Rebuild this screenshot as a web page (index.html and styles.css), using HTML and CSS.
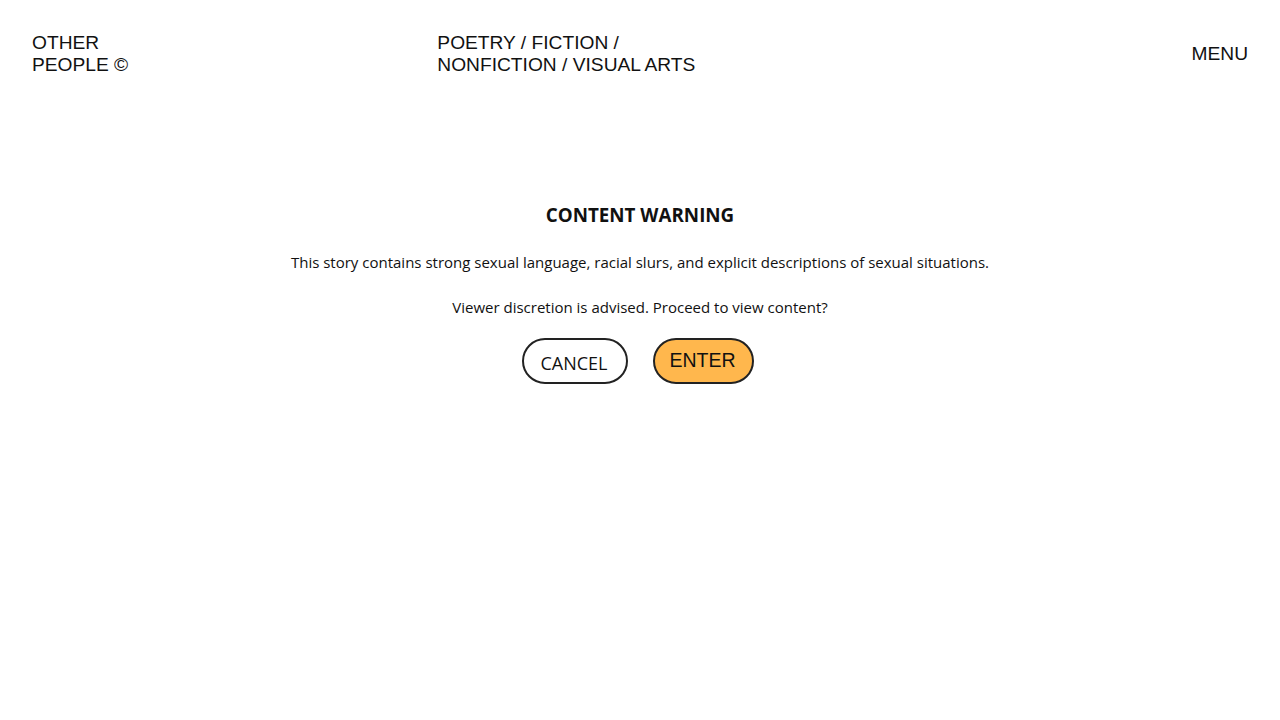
FILE: index.html
```html
<!DOCTYPE html>
<html lang="en">
<head>
<meta charset="utf-8">
<title>Other People</title>
<link rel="stylesheet" href="styles.css">
</head>
<body>
<header class="site-header">
  <div class="brand">OTHER<br>PEOPLE ©</div>
  <nav class="sections">POETRY / FICTION /<br>NONFICTION / VISUAL ARTS</nav>
  <div class="menu">MENU</div>
</header>
<main class="warning">
  <h1 class="warning-title">CONTENT WARNING</h1>
  <p class="warning-text">This story contains strong sexual language, racial slurs, and explicit descriptions of sexual situations.</p>
  <p class="warning-text">Viewer discretion is advised. Proceed to view content?</p>
  <div class="actions">
    <button class="btn btn-cancel">CANCEL</button>
    <button class="btn btn-enter">ENTER</button>
  </div>
</main>
</body>
</html>
```
FILE: styles.css
```css
* { box-sizing: border-box; }
html, body { margin: 0; padding: 0; background: #fff; }
body { color: #111; font-family: "Open Sans", "Noto Sans", sans-serif; }

.site-header {
  display: grid;
  grid-template-columns: 1fr 1fr 1fr;
  align-items: center;
  padding: 32px 32px 0 32px;
  font-family: "Liberation Sans", Arial, sans-serif;
  font-size: 19.2px;
  line-height: 22px;
  color: #111;
}
.menu { text-align: right; }

.warning {
  display: flex;
  flex-direction: column;
  align-items: center;
  text-align: center;
  padding-top: 127px;
}
.warning-title {
  margin: 0;
  font-size: 18.8px;
  font-weight: 700;
  line-height: 24px;
}
.warning-text {
  margin: 24px 0 0 0;
  font-size: 15px;
  line-height: 22px;
}
.warning-text + .warning-text { margin-top: 23px; }

.actions {
  display: flex;
  gap: 25px;
  margin-top: 20px;
  margin-right: 4px;
}
.btn {
  height: 46px;
  border: 2px solid #222;
  border-radius: 23px;
  color: #111;
  cursor: pointer;
  padding: 0 12px;
}
.btn-cancel {
  width: 106px;
  background: #fff;
  font-family: "Open Sans", "Noto Sans", sans-serif;
  font-size: 18px;
  padding-top: 3px;
  padding-right: 14px;
}
.btn-enter {
  width: 101px;
  background: #ffb74d;
  font-family: "Liberation Sans", Arial, sans-serif;
  font-size: 19.5px;
  padding-bottom: 2px;
  padding-right: 14px;
}
```
